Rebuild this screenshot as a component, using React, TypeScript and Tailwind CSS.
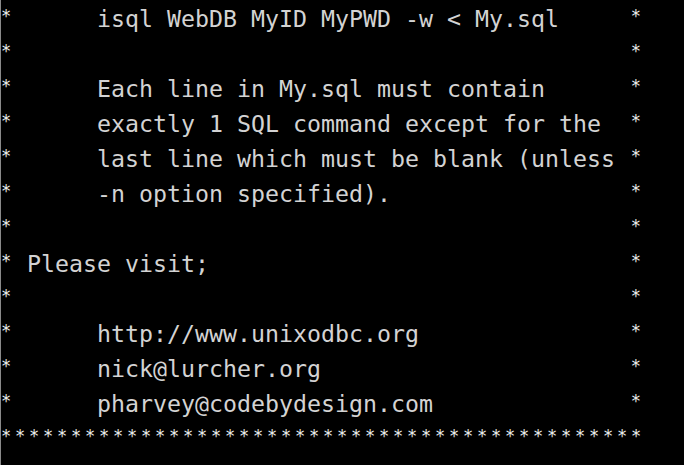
const lines = [
  "      isql WebDB MyID MyPWD -w < My.sql",
  "",
  "      Each line in My.sql must contain",
  "      exactly 1 SQL command except for the",
  "      last line which must be blank (unless",
  "      -n option specified).",
  "",
  " Please visit;",
  "",
  "      http://www.unixodbc.org",
  "      nick@lurcher.org",
  "      pharvey@codebydesign.com",
];

function Star() {
  return (
    <span className="relative -top-[5px] inline-block w-[14px] text-center text-[17px] text-[#ececec]">*</span>
  );
}

function Terminal() {
  return (
    <div className="h-[465px] w-[684px] overflow-hidden bg-black pt-[1px] shadow-[inset_1px_0_0_#8a8a8a]">
      <pre
        className="m-0 -ml-[1px] whitespace-pre text-[23.25px] leading-[35px] text-[#d3d3d3]"
        style={{ fontFamily: '"DejaVu Sans Mono", monospace' }}
      >
        {lines.map((l, i) => (
          <div key={i} className="h-[35px]">
            <Star />
            {l.padEnd(44)}
            <Star />
          </div>
        ))}
        <div className="h-[35px]">
          {Array.from({ length: 46 }).map((_, i) => (
            <Star key={i} />
          ))}
        </div>
      </pre>
    </div>
  );
}

export default function App() {
  return <Terminal />;
}
